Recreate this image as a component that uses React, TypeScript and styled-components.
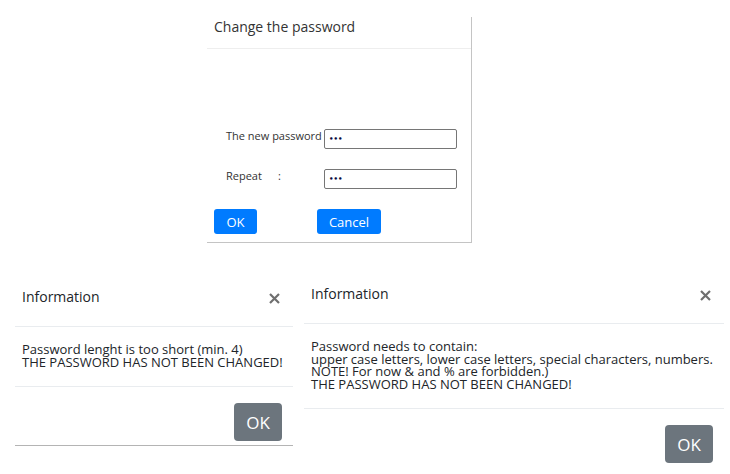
import React from "react";
import styled, { createGlobalStyle } from "styled-components";

const Global = createGlobalStyle`
  html, body { margin: 0; padding: 0; background: #fff; }
  body { font-family: "Open Sans", "Liberation Sans", sans-serif; color: #212529; }
`;

const Page = styled.div`
  width: 730px;
  height: 474px;
  overflow: hidden;
  display: flex;
  flex-direction: column;
`;

const Panel = styled.section`
  margin: 17px 0 0 207px;
  width: 264px;
  border-right: 1px solid #c4c4c4;
  border-bottom: 1px solid #c4c4c4;
`;

const PanelHeader = styled.div`
  padding: 0 7px 11px;
  border-bottom: 1px solid #eeeeee;
  font-size: 14px;
  line-height: 20px;
  color: #333;
`;

const Form = styled.div`
  padding: 80px 0 0 19px;
  display: flex;
  flex-direction: column;
  gap: 20px;
`;

const Row = styled.div`
  display: grid;
  grid-template-columns: 98px 133px;
  align-items: start;
`;

const Label = styled.label`
  font-size: 11px;
  line-height: 14px;
  color: #333;
  white-space: nowrap;
`;

const Colon = styled.span`
  margin-left: 16px;
`;

const PwInput = styled.input`
  box-sizing: border-box;
  width: 133px;
  height: 20px;
  margin: 0;
  padding: 0 4px;
  border: 1px solid #767676;
  border-radius: 2px;
  font-family: "DejaVu Sans", sans-serif;
  font-size: 7px;
  font-weight: bold;
  color: #0a0a40;
  background: #fff;
`;

const Actions = styled.div`
  display: flex;
  gap: 60px;
  padding: 20px 0 8px 7px;
`;

const BlueButton = styled.button<{ $w: number }>`
  width: ${(p) => p.$w}px;
  height: 25px;
  padding: 0;
  border: none;
  border-radius: 3px;
  background: #007bff;
  color: #fff;
  font-family: "Open Sans", "Liberation Sans", sans-serif;
  font-size: 13px;
`;

const Dialogs = styled.div`
  display: flex;
  align-items: flex-start;
  gap: 11px;
  padding-left: 15px;
`;

const Dialog = styled.div<{ $w: number; $top: number; $bottomLine?: boolean }>`
  width: ${(p) => p.$w}px;
  margin-top: ${(p) => p.$top}px;
  border-bottom: ${(p) => (p.$bottomLine ? "1px solid #b4b4b4" : "none")};
`;

const DialogHeader = styled.div`
  display: flex;
  align-items: center;
  justify-content: space-between;
  padding: 7px 13px 19px 7px;
  border-bottom: 1px solid #e9ecef;
`;

const DialogTitle = styled.div`
  font-size: 14px;
  line-height: 20px;
  color: #212529;
`;

const Close = styled.span`
  display: flex;
  width: 11px;
  height: 11px;
  margin-top: 2px;
`;

const DialogBody = styled.div`
  padding: 16px 7px 18px;
  font-size: 13px;
  line-height: 12.5px;
  color: #212529;
  border-bottom: 1px solid #e9ecef;
`;

const DialogFooter = styled.div`
  display: flex;
  justify-content: flex-end;
  padding: 16px 11px 4px;
`;

const GrayButton = styled.button`
  width: 48px;
  height: 38px;
  padding: 0;
  border: none;
  border-radius: 4px;
  background: #6c757d;
  color: #fff;
  font-family: "Open Sans", "Liberation Sans", sans-serif;
  font-size: 17px;
`;

const CloseIcon = () => (
  <Close>
    <svg width="11" height="11" viewBox="0 0 11 11">
      <path d="M1 1L10 10M10 1L1 10" stroke="#6f6f6f" strokeWidth="2.2" strokeLinecap="butt" />
    </svg>
  </Close>
);

export default function App() {
  return (
    <Page>
      <Global />
      <Panel>
        <PanelHeader>Change the password</PanelHeader>
        <Form>
          <Row>
            <Label>The new password</Label>
            <PwInput type="password" defaultValue="abc" readOnly />
          </Row>
          <Row>
            <Label>
              Repeat<Colon>:</Colon>
            </Label>
            <PwInput type="password" defaultValue="abc" readOnly />
          </Row>
        </Form>
        <Actions>
          <BlueButton $w={43}>OK</BlueButton>
          <BlueButton $w={64}>Cancel</BlueButton>
        </Actions>
      </Panel>
      <Dialogs>
        <Dialog $w={278} $top={37} $bottomLine>
          <DialogHeader>
            <DialogTitle>Information</DialogTitle>
            <CloseIcon />
          </DialogHeader>
          <DialogBody>
            Password lenght is too short (min. 4)
            <br />
            THE PASSWORD HAS NOT BEEN CHANGED!
          </DialogBody>
          <DialogFooter>
            <GrayButton>OK</GrayButton>
          </DialogFooter>
        </Dialog>
        <Dialog $w={420} $top={34}>
          <DialogHeader>
            <DialogTitle>Information</DialogTitle>
            <CloseIcon />
          </DialogHeader>
          <DialogBody>
            Password needs to contain:
            <br />
            upper case letters, lower case letters, special characters, numbers.
            <br />
            NOTE! For now &amp; and % are forbidden.)
            <br />
            THE PASSWORD HAS NOT BEEN CHANGED!
          </DialogBody>
          <DialogFooter>
            <GrayButton>OK</GrayButton>
          </DialogFooter>
        </Dialog>
      </Dialogs>
    </Page>
  );
}
